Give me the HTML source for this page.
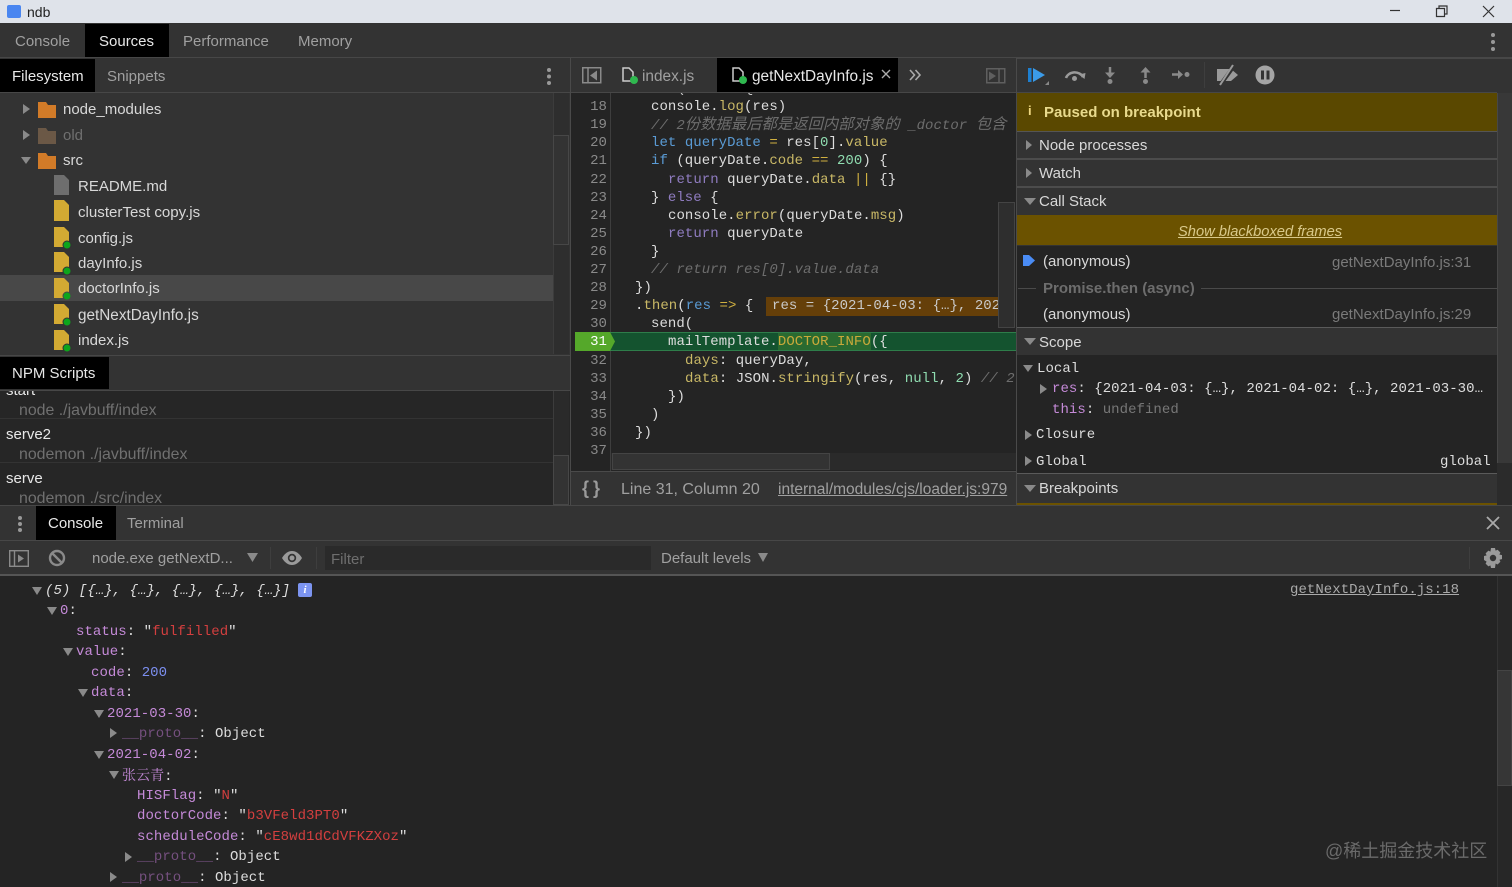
<!DOCTYPE html>
<html><head><meta charset="utf-8"><title>ndb</title>
<style>
html,body{margin:0;padding:0;background:#333}
#r{position:relative;width:1512px;height:887px;overflow:hidden;background:#333;font-family:"Liberation Sans","Noto Sans CJK SC",sans-serif;font-size:15px;color:#c8c8c8}
.b{position:absolute}
.t{position:absolute;height:20px;line-height:20px;white-space:pre;margin-top:1px}
.m{font-family:"Liberation Mono","Noto Sans CJK SC",monospace;font-size:14px;letter-spacing:.05px;white-space:pre;position:absolute;height:18px;line-height:18px;margin-top:1px}
.w{color:#e8e8e8}.g{color:#a0a0a0}.d{color:#707070}
svg{position:absolute;overflow:visible}
.y{color:#c9b866}.bl{color:#5a9bd5}.p{color:#8f7cc0}.c{color:#6d6d6d;font-style:italic}.n{color:#8fdcb0}.o{color:#d0b040}
.k{color:#c58ad8}.s{color:#d33f3f}.q{color:#ddd}.pr{color:#75507f}
.ar{position:absolute;width:0;height:0}
.rt{border-left:7px solid #8a8a8a;border-top:5px solid transparent;border-bottom:5px solid transparent}
.dn{border-top:7px solid #8a8a8a;border-left:5px solid transparent;border-right:5px solid transparent}
</style></head><body><div id="r">

<!-- title bar -->
<div class="b" style="left:0;top:0;width:1512px;height:23px;background:#dfe3ea"></div>
<div class="b" style="left:7px;top:5px;width:14px;height:13px;background:#4a86f0;border-radius:2px"></div>
<div class="t" style="left:27px;top:1px;color:#222;font-size:14px">ndb</div>
<svg style="left:1380px;top:0" width="130" height="23" fill="none" stroke="#333" stroke-width="1.2"><path d="M10 10.500H20"/><path d="M56.500 8.500h8v8h-8z M59 8.500V6h8v8h-2.500"/><path d="M103 6L114 17M114 6L103 17"/></svg>

<!-- main tabs -->
<div class="b" style="left:0;top:23px;width:1512px;height:34px;background:#333;border-bottom:1px solid #474747"></div>
<div class="b" style="left:85px;top:24px;width:84px;height:33px;background:#000"></div>
<div class="t g" style="left:15px;top:31px">Console</div>
<div class="t w" style="left:99px;top:31px">Sources</div>
<div class="t g" style="left:183px;top:31px">Performance</div>
<div class="t g" style="left:298px;top:31px">Memory</div>
<div class="b" style="left:1491px;top:33px;width:4px;height:4px;background:#999;border-radius:2px;box-shadow:0 7px #999,0 14px #999"></div>

<!-- left panel -->
<div class="b" style="left:0;top:58px;width:570px;height:34px;background:#333;border-bottom:1px solid #474747"></div>
<div class="b" style="left:0;top:59px;width:95px;height:33px;background:#000"></div>
<div class="t w" style="left:12px;top:66px">Filesystem</div>
<div class="t g" style="left:107px;top:66px">Snippets</div>
<div class="b" style="left:547px;top:68px;width:4px;height:4px;background:#999;border-radius:2px;box-shadow:0 6.500px #999,0 13px #999"></div>
<div class="b" style="left:0;top:93px;width:570px;height:261px;background:#333"></div>
<div class="b" style="left:0;top:275px;width:553px;height:26px;background:#484848"></div>
<div class="b" style="left:553px;top:93px;width:16px;height:261px;background:#2e2e2e;border-left:1px solid #3c3c3c;box-sizing:border-box"></div>
<div class="b" style="left:553px;top:135px;width:16px;height:110px;background:#333;border:1px solid #474747;box-sizing:border-box"></div>

<div class="ar rt" style="left:23px;top:104px"></div>
<div class="ar rt" style="left:23px;top:130px"></div>
<div class="ar dn" style="left:21px;top:157px"></div>

<svg style="left:38px;top:102px" width="18" height="68">
<path d="M0 0h8l2 3h8v13H0z" fill="#d27b28"/>
<path d="M0 26h8l2 3h8v13H0z" fill="#6b5846"/>
<path d="M0 51h8l2 3h8v13H0z" fill="#d27b28"/>
</svg>
<svg style="left:52px;top:176px" width="20" height="180">
<path d="M2 -1h10l5 5v15H2z" fill="#6e6e6e"/>
<path d="M2 24h10l5 5v16H2z" fill="#d3aa33"/>
<path d="M2 51h10l5 5v15H2z" fill="#d3aa33"/><circle cx="15" cy="69" r="4" fill="#0da51c" stroke="#333"/>
<path d="M2 76h10l5 5v15H2z" fill="#d3aa33"/><circle cx="15" cy="95" r="4" fill="#0da51c" stroke="#333"/>
<path d="M2 102h10l5 5v15H2z" fill="#d3aa33"/><circle cx="15" cy="120" r="4" fill="#0da51c" stroke="#484848"/>
<path d="M2 128h10l5 5v15H2z" fill="#d3aa33"/><circle cx="15" cy="146" r="4" fill="#0da51c" stroke="#333"/>
<path d="M2 154h10l5 5v15H2z" fill="#d3aa33"/><circle cx="15" cy="172" r="4" fill="#0da51c" stroke="#333"/>
</svg>

<div class="t" style="left:63px;top:99px;color:#d8d8d8">node_modules</div>
<div class="t d" style="left:63px;top:125px">old</div>
<div class="t" style="left:63px;top:150px;color:#d8d8d8">src</div>
<div class="t" style="left:78px;top:176px;color:#d8d8d8">README.md</div>
<div class="t" style="left:78px;top:202px;color:#d8d8d8;font-size:15.100px">clusterTest copy.js</div>
<div class="t" style="left:78px;top:228px;color:#d8d8d8">config.js</div>
<div class="t" style="left:78px;top:253px;color:#d8d8d8">dayInfo.js</div>
<div class="t" style="left:78px;top:278px;color:#d8d8d8">doctorInfo.js</div>
<div class="t" style="left:78px;top:305px;color:#d8d8d8;font-size:15.300px">getNextDayInfo.js</div>
<div class="t" style="left:78px;top:330px;color:#d8d8d8">index.js</div>

<!-- NPM scripts -->
<div class="b" style="left:0;top:355px;width:570px;height:34px;background:#333;border-top:1px solid #474747;border-bottom:1px solid #474747"></div>
<div class="b" style="left:0;top:357px;width:109px;height:32px;background:#000"></div>
<div class="t w" style="left:12px;top:363px">NPM Scripts</div>
<div class="b" style="left:0;top:391px;width:570px;height:114px;background:#262626;overflow:hidden">
 <div class="t w" style="left:6px;top:-11px">start</div>
</div>
<div class="t d" style="left:19px;top:400px;font-size:15.900px">node ./javbuff/index</div>
<div class="b" style="left:0;top:418px;width:553px;height:1px;background:#333"></div>
<div class="t w" style="left:6px;top:424px">serve2</div>
<div class="t d" style="left:19px;top:444px;font-size:15.900px">nodemon ./javbuff/index</div>
<div class="b" style="left:0;top:462px;width:553px;height:1px;background:#333"></div>
<div class="t w" style="left:6px;top:468px">serve</div>
<div class="t d" style="left:19px;top:488px;height:16px;overflow:hidden;font-size:15.900px">nodemon ./src/index</div>
<div class="b" style="left:553px;top:391px;width:16px;height:114px;background:#2a2a2a;border-left:1px solid #3c3c3c;box-sizing:border-box"></div>
<div class="b" style="left:553px;top:455px;width:16px;height:50px;background:#333;border:1px solid #474747;box-sizing:border-box"></div>

<!-- divider -->
<div class="b" style="left:570px;top:58px;width:1px;height:447px;background:#4a4a4a"></div>

<!-- editor tabs -->
<div class="b" style="left:571px;top:58px;width:445px;height:34px;background:#333;border-bottom:1px solid #474747"></div>
<div class="b" style="left:717px;top:58px;width:181px;height:34px;background:#000"></div>
<svg style="left:582px;top:67px" width="20" height="17" fill="none" stroke="#8a8a8a" stroke-width="1.500"><rect x=".75" y=".75" width="18" height="15"/><path d="M6 1v15"/><path d="M15 3.500v10L8 8.500z" fill="#8a8a8a" stroke="none"/></svg>
<svg style="left:622px;top:67px" width="18" height="18"><path d="M1 1h6l4 4v9H1z" fill="none" stroke="#ccc" stroke-width="1.500"/><circle cx="12" cy="13" r="4" fill="#2fb84f"/></svg>
<div class="t g" style="left:642px;top:66px;font-size:15.400px">index.js</div>
<svg style="left:732px;top:67px" width="18" height="18"><path d="M1 1h6l4 4v9H1z" fill="none" stroke="#ccc" stroke-width="1.500"/><circle cx="11" cy="13" r="4" fill="#2fb84f"/></svg>
<div class="t w" style="left:752px;top:66px;font-size:15.400px">getNextDayInfo.js</div>
<svg style="left:881px;top:69px" width="10" height="10" stroke="#aaa" stroke-width="1.400"><path d="M1 1l8 8M9 1l-8 8"/></svg>
<svg style="left:909px;top:70px" width="12" height="10" fill="none" stroke="#aaa" stroke-width="1.600"><path d="M1 0l4.500 5L1 10M6.500 0L11 5l-4.500 5"/></svg>
<svg style="left:986px;top:68px" width="20" height="16" fill="none" stroke="#5f5f5f" stroke-width="1.500"><rect x=".75" y=".75" width="18" height="14"/><path d="M13 1v14"/><path d="M3 3.500v9L10 8z" fill="#5f5f5f" stroke="none"/></svg>

<!-- editor -->
<div class="b" style="left:571px;top:93px;width:445px;height:378px;background:#242424"></div>
<div class="b" style="left:610px;top:93px;width:1px;height:378px;background:#3e3e3e"></div>
<div id="ed" class="b" style="left:571px;top:93px;width:445px;height:360px;overflow:hidden">
 <div class="m" style="left:64px;top:-14px;color:#ccc">.<span class="y">then</span>(<span class="bl">res</span> <span class="o">=&gt;</span> {</div>
 <div class="m" style="left:80px;top:4px;color:#ddd">console.<span class="y">log</span>(res)</div>
 <div class="m c" style="left:80px;top:22px">// 2<span style="font-size:15.300px">份数据最后都是返回内部对象的</span> _doctor <span style="font-size:15.300px">包含 )</span></div>
 <div class="m" style="left:80px;top:40px;color:#ddd"><span class="bl">let</span> <span class="bl">queryDate</span> <span class="o">=</span> res[<span class="n">0</span>].<span class="y">value</span></div>
 <div class="m" style="left:80px;top:58px;color:#ddd"><span class="bl">if</span> (queryDate.<span class="y">code</span> <span class="o">==</span> <span class="n">200</span>) {</div>
 <div class="m" style="left:97px;top:77px;color:#ddd"><span class="p">return</span> queryDate.<span class="y">data</span> <span class="o">||</span> {}</div>
 <div class="m" style="left:80px;top:95px;color:#ddd">} <span class="p">else</span> {</div>
 <div class="m" style="left:97px;top:113px;color:#ddd">console.<span class="y">error</span>(queryDate.<span class="y">msg</span>)</div>
 <div class="m" style="left:97px;top:131px;color:#ddd"><span class="p">return</span> queryDate</div>
 <div class="m" style="left:80px;top:149px;color:#ddd">}</div>
 <div class="m c" style="left:80px;top:167px">// return res[0].value.data</div>
 <div class="m" style="left:64px;top:185px;color:#ddd">})</div>
 <div class="b" style="left:195px;top:204px;width:233px;height:19px;background:#653f09"></div>
 <div class="m" style="left:64px;top:203px;color:#ddd">.<span class="y">then</span>(<span class="bl">res</span> <span class="o">=&gt;</span> {</div>
 <div class="m" style="left:201px;top:203px;color:#c9c9c9;width:227px;overflow:hidden">res = {2021-04-03: {…}, 2021-04-02</div>
 <div class="m" style="left:80px;top:221px;color:#ddd">send(</div>
 <div class="m" style="left:114px;top:258px;color:#ddd"><span class="y">days</span>: queryDay,</div>
 <div class="m" style="left:114px;top:276px;color:#ddd;width:331px;overflow:hidden"><span class="y">data</span>: JSON.<span class="y">stringify</span>(res, <span class="n">null</span>, <span class="n">2</span>) <span class="c">// 2</span></div>
 <div class="m" style="left:97px;top:294px;color:#ddd">})</div>
 <div class="m" style="left:80px;top:312px;color:#ddd">)</div>
 <div class="m" style="left:64px;top:330px;color:#ddd">})</div>
</div>
<!-- line 31 highlight -->
<div class="b" style="left:575px;top:332px;width:441px;height:19px;background:#14532f;border-top:1px solid #2e7d4a;border-bottom:1px solid #2e7d4a;box-sizing:border-box"></div>
<div class="b" style="left:778px;top:333px;width:93px;height:17px;background:#2a6a30"></div>
<div class="m" style="left:668px;top:332px;color:#ddd">mailTemplate.<span style="color:#c9a93a">DOCTOR_INFO</span>({</div>
<svg style="left:575px;top:332px" width="42" height="19"><path d="M0 0H35L40 9.500 35 19H0z" fill="#55a82a"/></svg>
<div class="m" style="left:575px;top:332px;width:32px;text-align:right;color:#fff;line-height:19px">31</div>
<div id="ln" style="color:#8a8a8a">
<div class="m" style="left:575px;top:97px;width:32px;text-align:right">18</div>
<div class="m" style="left:575px;top:115px;width:32px;text-align:right">19</div>
<div class="m" style="left:575px;top:133px;width:32px;text-align:right">20</div>
<div class="m" style="left:575px;top:151px;width:32px;text-align:right">21</div>
<div class="m" style="left:575px;top:170px;width:32px;text-align:right">22</div>
<div class="m" style="left:575px;top:188px;width:32px;text-align:right">23</div>
<div class="m" style="left:575px;top:206px;width:32px;text-align:right">24</div>
<div class="m" style="left:575px;top:224px;width:32px;text-align:right">25</div>
<div class="m" style="left:575px;top:242px;width:32px;text-align:right">26</div>
<div class="m" style="left:575px;top:260px;width:32px;text-align:right">27</div>
<div class="m" style="left:575px;top:278px;width:32px;text-align:right">28</div>
<div class="m" style="left:575px;top:296px;width:32px;text-align:right">29</div>
<div class="m" style="left:575px;top:314px;width:32px;text-align:right">30</div>
<div class="m" style="left:575px;top:351px;width:32px;text-align:right">32</div>
<div class="m" style="left:575px;top:369px;width:32px;text-align:right">33</div>
<div class="m" style="left:575px;top:387px;width:32px;text-align:right">34</div>
<div class="m" style="left:575px;top:405px;width:32px;text-align:right">35</div>
<div class="m" style="left:575px;top:423px;width:32px;text-align:right">36</div>
<div class="m" style="left:575px;top:441px;width:32px;text-align:right">37</div>
</div>
<!-- editor scrollbars -->
<div class="b" style="left:998px;top:202px;width:17px;height:126px;background:#2e2e2e;border:1px solid #444;box-sizing:border-box"></div>
<div class="b" style="left:611px;top:453px;width:405px;height:17px;background:#2a2a2a"></div>
<div class="b" style="left:612px;top:453px;width:218px;height:17px;background:#333;border:1px solid #444;box-sizing:border-box"></div>
<div class="b" style="left:571px;top:471px;width:445px;height:1px;background:#4a4a4a"></div>
<!-- status bar -->
<div class="b" style="left:571px;top:472px;width:445px;height:33px;background:#333"></div>
<div class="t" style="left:582px;top:477px;font-size:18px;font-weight:bold;color:#9a9a9a;letter-spacing:4px">{}</div>
<div class="t g" style="left:621px;top:479px;font-size:16px">Line 31, Column 20</div>
<div class="t g" style="left:778px;top:479px;text-decoration:underline;font-size:15.500px">internal/modules/cjs/loader.js:979</div>

<!-- right divider -->
<div class="b" style="left:1016px;top:58px;width:1px;height:447px;background:#4a4a4a"></div>
<!-- debug toolbar -->
<svg style="left:1027px;top:66px" width="250" height="20">
 <rect x="1" y="2" width="3.500" height="14" fill="#1d7fd0"/><path d="M6 2l12 7-12 7z" fill="#3b9be8"/><path d="M22 15v4h-4z" fill="#888"/>
 <path d="M39 12a9 7.500 0 0 1 17-1" fill="none" stroke="#9a9a9a" stroke-width="2.500"/><path d="M52 8.500l5.500 4.500 1-6z" fill="#9a9a9a"/><circle cx="47.500" cy="12.500" r="2.500" fill="#9a9a9a"/>
 <path d="M83 1v9" stroke="#8a8a8a" stroke-width="2.500"/><path d="M78 6.500h10l-5 5.500z" fill="#8a8a8a"/><circle cx="83" cy="15.500" r="2.500" fill="#8a8a8a"/>
 <path d="M118.500 12V3" stroke="#8a8a8a" stroke-width="2.500"/><path d="M113.500 6.500h10l-5-5.500z" fill="#8a8a8a"/><circle cx="118.500" cy="15.500" r="2.500" fill="#8a8a8a"/>
 <path d="M145 8.500h8" stroke="#8a8a8a" stroke-width="2.500"/><path d="M151 4l5 4.500-5 4.500z" fill="#8a8a8a"/><circle cx="160" cy="8.500" r="2.500" fill="#8a8a8a"/>
 <path d="M190 3h14l7 6-7 6h-14z" fill="#9a9a9a"/><path d="M194 18L207 0" stroke="#333" stroke-width="4"/><path d="M193 19L206 -1" stroke="#9a9a9a" stroke-width="2"/>
 <circle cx="238" cy="9" r="9.500" fill="#a5a5a5"/><rect x="234" y="4.500" width="3" height="9" fill="#333"/><rect x="239.500" y="4.500" width="3" height="9" fill="#333"/>
</svg>
<div class="b" style="left:1017px;top:58px;width:495px;height:1px;background:#474747"></div>
<div class="b" style="left:1204px;top:62px;width:1px;height:26px;background:#3e3e3e"></div>

<!-- right sidebar -->
<div class="b" style="left:1017px;top:92px;width:480px;height:1px;background:#474747"></div>
<div class="b" style="left:1017px;top:93px;width:480px;height:38px;background:#5a4800"></div>
<div class="t" style="left:1028px;top:100px;font-weight:bold;color:#eed77f;font-size:13px">i</div>
<div class="t" style="left:1044px;top:102px;font-weight:bold;color:#e8da8d">Paused on breakpoint</div>
<div class="b" style="left:1017px;top:131px;width:480px;height:373px;background:#333"></div>
<div class="b" style="left:1017px;top:131px;width:480px;height:1px;background:#555"></div>
<div class="b" style="left:1017px;top:158px;width:480px;height:2px;background:#4c4c4c"></div>
<div class="b" style="left:1017px;top:186px;width:480px;height:2px;background:#4c4c4c"></div>
<div class="ar rt" style="left:1026px;top:140px;border-left-width:6px;border-top-width:5px;border-bottom-width:5px"></div>
<div class="ar rt" style="left:1026px;top:168px;border-left-width:6px"></div>
<div class="ar dn" style="left:1024px;top:198px;border-left-width:6px;border-right-width:6px"></div>
<div class="t" style="left:1039px;top:135px;color:#d8d8d8">Node processes</div>
<div class="t" style="left:1039px;top:163px;color:#d8d8d8">Watch</div>
<div class="t" style="left:1039px;top:191px;color:#d8d8d8">Call Stack</div>
<div class="b" style="left:1017px;top:215px;width:480px;height:30px;background:#6b5200"></div>
<div class="t" style="left:1178px;top:221px;color:#d9c98a;font-style:italic;text-decoration:underline;font-size:14.700px">Show blackboxed frames</div>
<div class="b" style="left:1017px;top:246px;width:480px;height:81px;background:#242424"></div>
<svg style="left:1022px;top:254px" width="14" height="13"><path d="M1 1h6l6 5.500-6 5.500H1z" fill="#4a8cf5"/></svg>
<div class="t" style="left:1043px;top:251px;color:#d8d8d8">(anonymous)</div>
<div class="t d" style="left:1332px;top:252px;color:#7a7a7a">getNextDayInfo.js:31</div>
<div class="b" style="left:1018px;top:288px;width:18px;height:1px;background:#4a4a4a"></div>
<div class="b" style="left:1201px;top:288px;width:296px;height:1px;background:#4a4a4a"></div>
<div class="t" style="left:1043px;top:278px;font-weight:bold;color:#6d6d6d">Promise.then (async)</div>
<div class="t" style="left:1043px;top:304px;color:#d8d8d8">(anonymous)</div>
<div class="t" style="left:1332px;top:304px;color:#7a7a7a">getNextDayInfo.js:29</div>
<div class="b" style="left:1017px;top:327px;width:480px;height:1px;background:#5a5a5a"></div>
<div class="ar dn" style="left:1024px;top:338px;border-left-width:6px;border-right-width:6px"></div>
<div class="t" style="left:1039px;top:332px;color:#d8d8d8">Scope</div>
<div class="b" style="left:1017px;top:355px;width:480px;height:118px;background:#242424"></div>
<div class="ar dn" style="left:1023px;top:365px;border-left-width:5px;border-right-width:5px"></div>
<div class="m" style="left:1037px;top:359px;color:#ddd">Local</div>
<div class="ar rt" style="left:1040px;top:384px"></div>
<div class="m" style="left:1052px;top:379px;color:#ddd;width:440px;overflow:hidden"><span class="k">res</span>: {2021-04-03: {…}, 2021-04-02: {…}, 2021-03-30…</div>
<div class="m" style="left:1052px;top:400px;color:#ddd"><span class="k">this</span>: <span style="color:#777">undefined</span></div>
<div class="ar rt" style="left:1025px;top:430px"></div>
<div class="m" style="left:1036px;top:425px;color:#ddd">Closure</div>
<div class="ar rt" style="left:1025px;top:456px"></div>
<div class="m" style="left:1036px;top:452px;color:#ddd">Global</div>
<div class="m" style="left:1440px;top:452px;color:#ddd">global</div>
<div class="b" style="left:1017px;top:473px;width:480px;height:1px;background:#5a5a5a"></div>
<div class="ar dn" style="left:1024px;top:485px;border-left-width:6px;border-right-width:6px"></div>
<div class="t" style="left:1039px;top:478px;color:#d8d8d8">Breakpoints</div>
<div class="b" style="left:1017px;top:503px;width:480px;height:2px;background:#6b5200"></div>
<!-- right outer scrollbar -->
<div class="b" style="left:1497px;top:93px;width:15px;height:412px;background:#2b2b2b"></div>
<div class="b" style="left:1497px;top:93px;width:15px;height:370px;background:#383838;border-left:1px solid #474747;box-sizing:border-box"></div>

<!-- drawer -->
<div class="b" style="left:0;top:505px;width:1512px;height:36px;background:#333;border-top:1px solid #474747;border-bottom:1px solid #474747;box-sizing:border-box"></div>
<div class="b" style="left:18px;top:516px;width:4px;height:4px;background:#999;border-radius:2px;box-shadow:0 6px #999,0 12px #999"></div>
<div class="b" style="left:36px;top:506px;width:80px;height:34px;background:#000"></div>
<div class="t w" style="left:48px;top:513px">Console</div>
<div class="t g" style="left:127px;top:513px">Terminal</div>
<svg style="left:1487px;top:517px" width="12" height="12" stroke="#aaa" stroke-width="1.800"><path d="M0 0l12 12M12 0L0 12"/></svg>

<!-- console toolbar -->
<div class="b" style="left:0;top:541px;width:1512px;height:33px;background:#333"></div>
<div class="b" style="left:0;top:574px;width:1512px;height:2px;background:#555"></div>
<svg style="left:9px;top:550px" width="60" height="17" fill="none" stroke="#8a8a8a" stroke-width="1.400"><rect x=".7" y=".7" width="18.600" height="15.600"/><path d="M5.500 1v15"/><path d="M9 4.500v8l6-4z" fill="#8a8a8a" stroke="none"/><circle cx="48" cy="8" r="7" stroke-width="2.400"/><path d="M43 3l10 10" stroke-width="2.400"/></svg>
<div class="t g" style="left:92px;top:548px">node.exe getNextD...</div>
<svg style="left:247px;top:553px" width="11" height="9"><path d="M0 0h11L5.500 9z" fill="#8a8a8a"/></svg>
<div class="b" style="left:270px;top:547px;width:1px;height:22px;background:#3e3e3e"></div>
<svg style="left:282px;top:551px" width="20" height="14"><path d="M0 7C3 2 6.500 0 10 0s7 2 10 7c-3 5-6.500 7-10 7S3 12 0 7z" fill="#9a9a9a"/><circle cx="10" cy="7" r="4.200" fill="#333"/><circle cx="10" cy="7" r="2.500" fill="#9a9a9a"/></svg>
<div class="b" style="left:316px;top:547px;width:1px;height:22px;background:#3e3e3e"></div>
<div class="b" style="left:325px;top:546px;width:326px;height:24px;background:#2a2a2a"></div>
<div class="t" style="left:331px;top:549px;color:#6e6e6e">Filter</div>
<div class="t g" style="left:661px;top:548px">Default levels</div>
<svg style="left:758px;top:553px" width="10" height="9"><path d="M0 0h10L5 9z" fill="#8a8a8a"/></svg>
<div class="b" style="left:1469px;top:547px;width:1px;height:22px;background:#3e3e3e"></div>
<svg style="left:1483px;top:548px" width="20" height="20" viewBox="0 0 20 20"><path d="M8 0h4l.6 2.600 2-.9 2.800 2.800-1 2 2.600.6v4l-2.600.6 1 2-2.800 2.800-2-1L12 20H8l-.6-2.600-2 1-2.800-2.800 1-2L1 12V8l2.600-.6-1-2 2.800-2.800 2 1z" fill="#9a9a9a"/><circle cx="10" cy="10" r="3.200" fill="#333"/></svg>

<!-- console -->
<div class="b" style="left:0;top:576px;width:1497px;height:311px;background:#242424"></div>
<div class="b" style="left:1497px;top:576px;width:15px;height:311px;background:#272727;border-left:1px solid #333;box-sizing:border-box"></div>
<div class="b" style="left:1497px;top:670px;width:15px;height:116px;background:#363636;border:1px solid #444;box-sizing:border-box"></div>
<div class="ar dn" style="left:32px;top:587px;border-top-width:8px"></div>
<div class="m" style="left:45px;top:581px;color:#ddd;font-style:italic">(5) [{…}, {…}, {…}, {…}, {…}]</div>
<div class="b" style="left:298px;top:583px;width:14px;height:14px;background:#7c94f0;border-radius:2px;color:#fff;font:italic bold 11px/14px 'Liberation Serif',serif;text-align:center">i</div>
<div class="m" style="left:1290px;top:580px;color:#aaa;text-decoration:underline">getNextDayInfo.js:18</div>
<div class="ar dn" style="left:47px;top:607px;border-top-width:8px"></div>
<div class="m" style="left:60px;top:601px;color:#ddd"><span class="k">0</span>:</div>
<div class="m" style="left:76px;top:622px;color:#ddd"><span class="k">status</span>: "<span class="s">fulfilled</span>"</div>
<div class="ar dn" style="left:63px;top:648px;border-top-width:8px"></div>
<div class="m" style="left:76px;top:642px;color:#ddd"><span class="k">value</span>:</div>
<div class="m" style="left:91px;top:663px;color:#ddd"><span class="k">code</span>: <span style="color:#7c8ff0">200</span></div>
<div class="ar dn" style="left:78px;top:689px;border-top-width:8px"></div>
<div class="m" style="left:91px;top:683px;color:#ddd"><span class="k">data</span>:</div>
<div class="ar dn" style="left:94px;top:710px;border-top-width:8px"></div>
<div class="m" style="left:107px;top:704px;color:#ddd"><span class="k">2021-03-30</span>:</div>
<div class="ar rt" style="left:110px;top:728px"></div>
<div class="m" style="left:122px;top:724px;color:#ddd"><span class="pr">__proto__</span>: Object</div>
<div class="ar dn" style="left:94px;top:751px;border-top-width:8px"></div>
<div class="m" style="left:107px;top:745px;color:#ddd"><span class="k">2021-04-02</span>:</div>
<div class="ar dn" style="left:109px;top:771px;border-top-width:8px"></div>
<div class="m" style="left:122px;top:765px;color:#ddd"><span class="k" style="font-family:'Noto Serif CJK SC',serif">张云青</span>:</div>
<div class="m" style="left:137px;top:786px;color:#ddd"><span class="k">HISFlag</span>: "<span class="s">N</span>"</div>
<div class="m" style="left:137px;top:806px;color:#ddd"><span class="k">doctorCode</span>: "<span class="s">b3VFeld3PT0</span>"</div>
<div class="m" style="left:137px;top:827px;color:#ddd"><span class="k">scheduleCode</span>: "<span class="s">cE8wd1dCdVFKZXoz</span>"</div>
<div class="ar rt" style="left:125px;top:852px"></div>
<div class="m" style="left:137px;top:847px;color:#ddd"><span class="pr">__proto__</span>: Object</div>
<div class="ar rt" style="left:110px;top:872px"></div>
<div class="m" style="left:122px;top:868px;color:#ddd"><span class="pr">__proto__</span>: Object</div>
<div class="t" style="left:1325px;top:840px;font-size:18px;color:#6a6a6a">@稀土掘金技术社区</div>
</div></body></html>
